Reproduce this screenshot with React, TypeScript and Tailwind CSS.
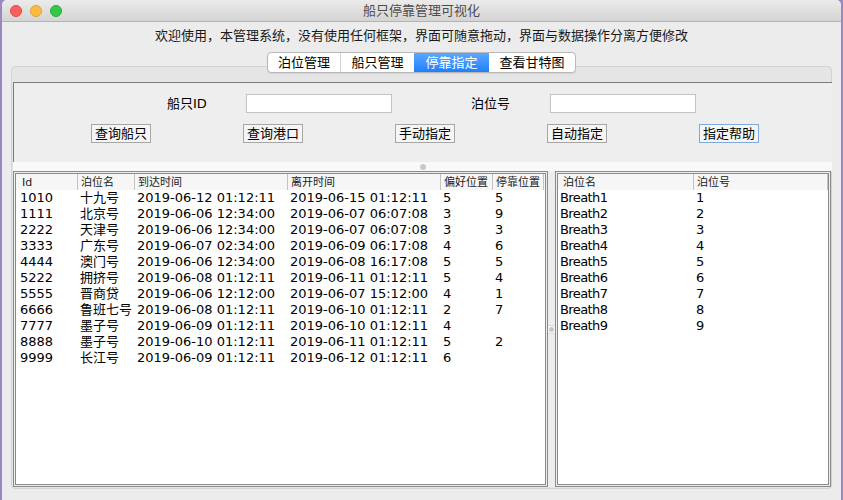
import React from 'react';

const FONT = { fontFamily: '"DejaVu Sans", "Noto Sans CJK SC", sans-serif' };

const ships: string[][] = [
  ['1010', '十九号', '2019-06-12 01:12:11', '2019-06-15 01:12:11', '5', '5'],
  ['1111', '北京号', '2019-06-06 12:34:00', '2019-06-07 06:07:08', '3', '9'],
  ['2222', '天津号', '2019-06-06 12:34:00', '2019-06-07 06:07:08', '3', '3'],
  ['3333', '广东号', '2019-06-07 02:34:00', '2019-06-09 06:17:08', '4', '6'],
  ['4444', '澳门号', '2019-06-06 12:34:00', '2019-06-08 16:17:08', '5', '5'],
  ['5222', '拥挤号', '2019-06-08 01:12:11', '2019-06-11 01:12:11', '5', '4'],
  ['5555', '晋商贷', '2019-06-06 12:12:00', '2019-06-07 15:12:00', '4', '1'],
  ['6666', '鲁班七号', '2019-06-08 01:12:11', '2019-06-10 01:12:11', '2', '7'],
  ['7777', '墨子号', '2019-06-09 01:12:11', '2019-06-10 01:12:11', '4', ''],
  ['8888', '墨子号', '2019-06-10 01:12:11', '2019-06-11 01:12:11', '5', '2'],
  ['9999', '长江号', '2019-06-09 01:12:11', '2019-06-12 01:12:11', '6', ''],
];

const berths = [1, 2, 3, 4, 5, 6, 7, 8, 9].map((n) => [`Breath${n}`, `${n}`]);

type Col = { title: string; w: string; head: string; cell: string };

const shipCols: Col[] = [
  { title: 'Id', w: 'w-[61px]', head: 'pl-[6px]', cell: 'pl-[4px]' },
  { title: '泊位名', w: 'w-[57px]', head: 'pl-[3px] border-l border-[#c4c4c4]', cell: 'pl-[3px]' },
  { title: '到达时间', w: 'w-[153px]', head: 'pl-[3px] border-l border-[#c4c4c4]', cell: 'pl-[3px]' },
  { title: '离开时间', w: 'w-[153px]', head: 'pl-[3px] border-l border-[#c4c4c4]', cell: 'pl-[3px]' },
  { title: '偏好位置', w: 'w-[52px]', head: 'pl-[3px] border-l border-[#c4c4c4]', cell: 'pl-[3px]' },
  { title: '停靠位置', w: 'w-[51px]', head: 'pl-[3px] border-l border-[#c4c4c4]', cell: 'pl-[3px]' },
];

const berthCols: Col[] = [
  { title: '泊位名', w: 'w-[135px]', head: 'pl-[5px]', cell: 'pl-[2px] tracking-[-0.6px]' },
  { title: '泊位号', w: 'w-[134px]', head: 'pl-[3px] border-l border-[#c4c4c4]', cell: 'pl-[3px]' },
];

const Table: React.FC<{ cols: Col[]; rows: string[][] }> = ({ cols, rows }) => (
  <div className="h-full border border-[#8a8a8a] p-[1px] bg-[#eeeeee]">
    <div className="h-full border border-[#8a8a8a] bg-white overflow-hidden">
      <div className="flex h-[16px] bg-[#f6f6f6] items-center">
        {cols.map((c) => (
          <div
            key={c.title}
            className={`${c.w} ${c.head} h-full flex items-center text-[11px] leading-none text-[#222]`}
          >
            {c.title}
          </div>
        ))}
        <div className="flex-1 h-full border-l border-[#c4c4c4]" />
      </div>
      {rows.map((r, i) => (
        <div key={i} className="flex h-[16px] items-center">
          {cols.map((c, j) => (
            <div key={j} className={`${c.w} ${c.cell} text-[13px] leading-[16px] text-black whitespace-nowrap`}>
              {r[j]}
            </div>
          ))}
        </div>
      ))}
    </div>
  </div>
);

const Button: React.FC<{ label: string; focused?: boolean }> = ({ label, focused }) => (
  <div
    className={`w-[60px] h-[19px] flex items-center justify-center text-[13px] leading-none bg-[#f5f5f5] border ${
      focused ? 'border-[#7fa9d8]' : 'border-[#a6a6a6]'
    }`}
  >
    {label}
  </div>
);

export default function App() {
  const tabs = [
    { label: '泊位管理', w: 'w-[72px]' },
    { label: '船只管理', w: 'w-[74px]' },
    { label: '停靠指定', w: 'w-[75px]', active: true },
    { label: '查看甘特图', w: 'w-[86px]' },
  ];

  return (
    <div className="w-[843px] h-[500px] bg-[#9a88c2] px-[2px] overflow-hidden" style={FONT}>
      <div className="h-full flex flex-col bg-[#ececec] rounded-t-[5px] overflow-hidden">
        {/* title bar */}
        <div className="h-[22px] shrink-0 grid grid-cols-[1fr_auto_1fr] items-center bg-gradient-to-b from-[#ebebeb] to-[#d4d4d4] border-b border-[#b3b3b3]">
          <div className="flex items-center gap-[8px] pl-[8px]">
            <span className="w-[12px] h-[12px] rounded-full bg-[#fc605b] border border-[#de4a43]" />
            <span className="w-[12px] h-[12px] rounded-full bg-[#fdbc40] border border-[#dea236]" />
            <span className="w-[12px] h-[12px] rounded-full bg-[#34c84a] border border-[#27aa35]" />
          </div>
          <div className="text-[13px] leading-none text-[#4d4d4d]">船只停靠管理可视化</div>
          <div />
        </div>

        {/* welcome */}
        <div className="h-[26px] shrink-0 flex items-center justify-center text-[13px] leading-none text-[#1a1a1a]">
          欢迎使用，本管理系统，没有使用任何框架，界面可随意拖动，界面与数据操作分离方便修改
        </div>

        {/* tabs */}
        <div className="mt-[4px] h-[21px] flex justify-center relative z-10 -mb-[7px]">
          <div className="flex bg-white border border-[#b8b8b8] rounded-[4px] overflow-hidden shadow-[0_1px_1px_rgba(0,0,0,0.08)]">
            {tabs.map((t, i) => (
              <div
                key={t.label}
                className={`${t.w} flex items-center justify-center text-[13px] leading-none ${
                  t.active ? 'bg-gradient-to-b from-[#5aa8ff] to-[#1c80fa] text-white' : 'text-black'
                } ${i > 0 && !t.active && !tabs[i - 1].active ? 'border-l border-[#d3d3d3]' : ''}`}
              >
                {t.label}
              </div>
            ))}
          </div>
        </div>

        {/* tab panel */}
        <div className="mx-[9px] h-[423px] bg-[#e5e5e5] border border-[#d3d3d3] rounded-[4px] pt-[15px] pl-[1px]">
          <div className="w-[819px] flex flex-col">
            {/* form */}
            <div className="h-[80px] bg-[#eeeeee] border-t border-l border-[#7c7c7c] pt-[11px] pl-[153px] flex flex-col gap-[11px]">
              <div className="flex items-center h-[19px]">
                <div className="w-[79px] text-[13px] leading-none">船只ID</div>
                <div className="w-[146px] h-[19px] bg-white border border-[#c2c2c2]" />
                <div className="w-[79px]" />
                <div className="w-[79px] text-[13px] leading-none">泊位号</div>
                <div className="w-[146px] h-[19px] bg-white border border-[#c2c2c2]" />
              </div>
              <div className="flex -ml-[76px] gap-[92px]">
                <Button label="查询船只" />
                <Button label="查询港口" />
                <Button label="手动指定" />
                <Button label="自动指定" />
                <Button label="指定帮助" focused />
              </div>
            </div>

            {/* vertical split divider */}
            <div className="h-[9px] bg-[#f9f9f9] flex items-center justify-center">
              <span className="w-[6px] h-[6px] rounded-full bg-[#c8c8c8]" />
            </div>

            {/* tables */}
            <div className="h-[316px] flex">
              <div className="w-[535px] h-full">
                <Table cols={shipCols} rows={ships} />
              </div>
              <div className="w-[7px] h-full bg-[#eeeeee] flex items-center justify-center">
                <div className="w-[7px] h-[9px] bg-[#f6f6f6] border-y border-[#dcdcdc] flex items-center justify-center">
                  <span className="w-[5px] h-[5px] rounded-full bg-[#c8c8c8]" />
                </div>
              </div>
              <div className="w-[276px] h-full">
                <Table cols={berthCols} rows={berths} />
              </div>
            </div>
          </div>
        </div>
      </div>
    </div>
  );
}
